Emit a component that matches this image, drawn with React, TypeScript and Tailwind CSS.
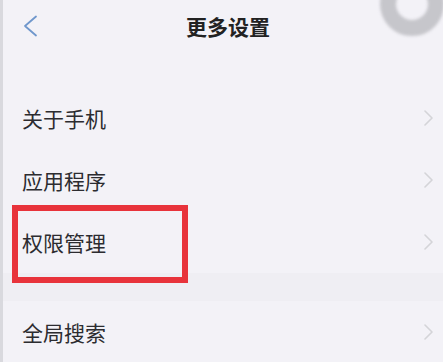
const items = [
    { label: "关于手机" },
    { label: "应用程序" },
    { label: "权限管理" },
];

const Chevron = () => (
    <svg width="9" height="16" viewBox="0 0 9 16" fill="none">
        <path d="M1 1l7 7-7 7" stroke="#d4d4d8" strokeWidth="1.6" strokeLinecap="round" strokeLinejoin="round" />
    </svg>
);

const Row = ({ label }: { label: string }) => (
    <div className="h-[62px] flex items-center justify-between pl-[19px] pr-[10px]">
        <span className="text-[21px] text-[#2c2c30] leading-none">{label}</span>
        <Chevron />
    </div>
);

export default function App() {
    return (
        <div
            className="relative w-[443px] h-[362px] overflow-hidden bg-[#f3f2f7] border-l-[3px] border-[#d9d9de]"
            style={{ fontFamily: '"Noto Sans CJK SC", "Noto Sans", sans-serif' }}
        >
            {/* loading ring */}
            <div className="absolute left-[377px] top-[-28px] w-[64px] h-[64px] rounded-full border-[16px] border-[#c6c6cb] blur-[1.5px]" />

            {/* Header */}
            <div className="h-[52px] flex items-center relative">
                <svg className="ml-[19px]" width="16" height="22" viewBox="0 0 16 22" fill="none">
                    <path d="M14 1.5L3 11l11 9.5" stroke="#6f97cc" strokeWidth="1.8" strokeLinecap="round" strokeLinejoin="round" />
                </svg>
                <h1 className="absolute left-0 right-0 text-center text-[21px] font-bold text-[#222] leading-none pl-[10px]">
                    更多设置
                </h1>
            </div>
            <div className="h-[35px]" />

            {items.map((item) => (
                <Row key={item.label} label={item.label} />
            ))}
            <div className="h-[28px] bg-[#efeef3]" />
            <Row label="全局搜索" />

            {/* highlight annotation */}
            <div className="absolute left-[9px] top-[205px] w-[176px] h-[78px] border-[6px] border-[#e8333b]" />
        </div>
    );
}
